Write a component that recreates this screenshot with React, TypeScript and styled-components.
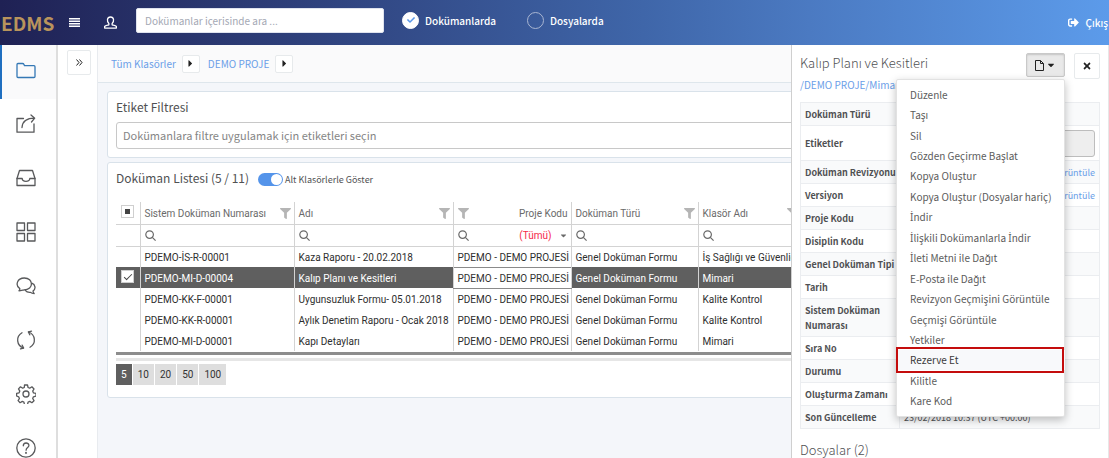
import React, { useState } from "react";
import styled, { createGlobalStyle, css } from "styled-components";
import { FaCaretDown, FaCaretRight, FaCheck, FaFilter, FaSignOutAlt, FaTimes } from "react-icons/fa";

const sans = `"Noto Sans CJK JP", "Noto Sans", sans-serif`;
const plain = `"Noto Sans", "Open Sans", sans-serif`;
const gridFace = `Roboto, "Noto Sans", sans-serif`;

const Global = createGlobalStyle`
  *, *::before, *::after { box-sizing: border-box; }
  body { margin: 0; font-family: ${sans}; font-size: 10px; line-height: 15px; color: #505153; background: #fff; }
  button, input, select { font: inherit; color: inherit; margin: 0; }
  button { cursor: pointer; }
  a { color: #6a9ee8; text-decoration: none; }
  h1, h2, h3, ul { margin: 0; padding: 0; font-weight: 400; }
  ul { list-style: none; }
`;

const Page = styled.div`
  display: flex;
  flex-direction: column;
  height: 100vh;
  overflow: hidden;
`;

const TopBar = styled.header`
  display: flex;
  align-items: center;
  flex: 0 0 45px;
  padding: 0 1px 5px;
  color: #fff;
  background: linear-gradient(90deg, #1f2154 0%, #2e407b 27%, #3f66a9 58%, #4b7ac2 73%, #5c9bea 100%);
`;

const Logo = styled.a`
  flex: 0 0 55px;
  padding-top: 5px;
  color: #b9945c;
  font-size: 19px;
  line-height: 32px;
  font-weight: 700;
`;

const BarButton = styled.button`
  display: grid;
  place-items: center;
  flex: 0 0 36px;
  height: 24px;
  padding: 4px 0 0;
  border: 0;
  background: none;
  color: #fff;
`;

const Search = styled.input`
  flex: 0 0 248px;
  height: 25px;
  margin-left: 8px;
  padding: 0 8px;
  border: 1px solid #dfe3ee;
  border-radius: 2px;
  background: #fff;
  color: #555;
  outline: 0;
  &::placeholder { color: #a4a8b4; opacity: 1; }
`;

const Choice = styled.label`
  display: flex;
  align-items: center;
  gap: 6px;
  margin-left: 18px;
  width: 107px;
  font-weight: 500;
`;

const RadioWrap = styled.span`
  position: relative;
  display: grid;
  place-items: center;
  svg { position: absolute; color: #5a97e8; pointer-events: none; }
`;

const Radio = styled.input`
  appearance: none;
  width: 17px;
  height: 17px;
  border: 1px solid #a9b6d2;
  border-radius: 50%;
  &:checked { background: #fff; border-color: #fff; }
`;

const SignOut = styled.a`
  display: flex;
  align-items: center;
  gap: 7px;
  margin-left: auto;
  padding-top: 5px;
  color: #fff;
  font-weight: 500;
`;

const Body = styled.div`
  display: flex;
  flex: 1;
  min-height: 0;
`;

const Rail = styled.nav`
  flex: 0 0 58px;
  border-right: 2px solid #dedede;
  overflow: hidden;
`;

const RailLink = styled.a<{ $active?: boolean }>`
  display: flex;
  align-items: center;
  height: 54px;
  padding: 0 0 4px 14px;
  border-left: 2px solid ${p => (p.$active ? "#1f6fc0" : "transparent")};
  background: ${p => (p.$active ? "#fafafb" : "none")};
  color: ${p => (p.$active ? "#3478b5" : "#58595b")};
`;

const Gutter = styled.div`
  flex: 0 0 40px;
  padding: 5px 0 0 9px;
  border-right: 1px solid #e8ebef;
`;

const SmallButton = styled.button<{ $w: number; $h: number; $pressed?: boolean }>`
  display: inline-flex;
  align-items: center;
  justify-content: center;
  gap: 1px;
  flex: none;
  width: ${p => p.$w}px;
  height: ${p => p.$h}px;
  padding: 0;
  border: 1px solid ${p => (p.$pressed ? "#c9c9c9" : "#e7eaec")};
  border-radius: 2px;
  background: ${p => (p.$pressed ? "#e9e9e9" : "#fff")};
  box-shadow: ${p => (p.$pressed ? "inset 0 1px 2px #c4c4c4" : "none")};
  color: #222;
`;

const Main = styled.main`
  flex: 1;
  min-width: 0;
  overflow: hidden;
  background: #f4f6fa;
`;

const Crumbs = styled.nav`
  display: flex;
  align-items: center;
  height: 38px;
  padding-left: 13px;
  border-bottom: 1px solid #dee6ec;
  background: #fafafb;
  a { margin-right: 6px; }
  button { margin-right: 8px; }
`;

const Card = styled.section`
  width: calc(100% + 10px);
  margin: 8px 0 0 9px;
  padding: 0 8px;
  border: 1px solid #d9e2ea;
  border-radius: 3px;
  background: #fff;
  & + & { margin-top: 4px; }
`;

const CardTitle = styled.h2`
  font-size: 12px;
  line-height: 30px;
`;

const TagInput = styled.input`
  display: block;
  width: 100%;
  height: 27px;
  margin-bottom: 8px;
  padding: 0 6px 2px;
  border: 1px solid #c8c8c8;
  border-radius: 3px;
  outline: 0;
  font-size: 11px;
  &::placeholder { color: #858585; opacity: 1; }
`;

const ListHead = styled.div`
  display: flex;
  align-items: center;
  gap: 9px;
  height: 30px;
`;

const SwitchLabel = styled.label`
  display: flex;
  align-items: center;
  gap: 2px;
  padding-top: 3px;
  font-size: 9px;
`;

const Switch = styled.input`
  appearance: none;
  width: 25px;
  height: 13px;
  border-radius: 7px;
  background: #c8c8c8;
  &::before {
    content: "";
    display: block;
    width: 11px;
    height: 11px;
    margin: 1px;
    border-radius: 50%;
    background: #fff;
  }
  &:checked { background: #5494ea; }
  &:checked::before { margin-left: 13px; }
`;

const Grid = styled.table`
  width: 100%;
  margin-top: 9px;
  table-layout: fixed;
  border-collapse: collapse;
  color: #2e2e2e;
  font-family: ${gridFace};
  th, td {
    height: 21px;
    padding: 1px 3px 0 4px;
    border-left: 1px solid #d3d3d3;
    text-align: left;
    font-weight: 400;
    white-space: nowrap;
    overflow: hidden;
  }
  th:first-child, td:first-child { border-left: 0; padding: 0; text-align: center; }
  thead th, thead td { height: 22px; border-bottom: 1px solid #d3d3d3; color: #6a6a6a; }
`;

const Row = styled.tr<{ $selected: boolean }>`
  ${p => p.$selected && css`
    color: #fff;
    background: #5f5f5f;
    td:nth-child(4) { background: #fff; color: #333; border-top: 1px solid #8a8a8a; border-bottom: 1px solid #8a8a8a; }
  `}
`;

const HeadCell = styled.div<{ $reverse?: boolean }>`
  display: flex;
  flex-direction: ${p => (p.$reverse ? "row-reverse" : "row")};
  align-items: center;
  justify-content: space-between;
  svg { flex: none; color: #b5b5b5; }
`;

const FilterCell = styled.label`
  display: flex;
  align-items: center;
  svg { flex: none; color: #6a6a6a; }
`;

const FilterInput = styled.input`
  min-width: 0;
  flex: 1;
  height: 18px;
  border: 0;
  outline: 0;
  background: none;
`;

const FilterSelect = styled.select`
  flex: 1;
  appearance: none;
  border: 0;
  padding: 0 7px 0 0;
  outline: 0;
  background: none;
  color: #f5274a;
  text-align-last: right;
`;

const Box = styled.input<{ $mixed?: boolean }>`
  appearance: none;
  display: grid;
  place-items: center;
  width: 13px;
  height: 13px;
  && { margin: 0 auto 2px; }
  border: 1px solid #cfcfcf;
  background: #fff;
  ${p => p.$mixed && css`&::before { content: ""; width: 5px; height: 5px; background: #444; }`}
  &:checked::before {
    content: "";
    width: 8px;
    height: 4px;
    margin-top: -2px;
    border: solid #444;
    border-width: 0 0 1px 1px;
    transform: rotate(-45deg);
  }
`;

const Scroll = styled.div`
  height: 9px;
  margin-top: 1px;
  border-top: 3px solid #8d8d8d;
  border-bottom: 3px solid #e6e6e6;
`;

const Pager = styled.div`
  display: flex;
  gap: 1px;
  padding: 3px 0 12px;
`;

const PageButton = styled.button<{ $on?: boolean }>`
  height: 21px;
  padding: 0 5px;
  border: 0;
  background: ${p => (p.$on ? "#5f5f5f" : "#dedede")};
  color: ${p => (p.$on ? "#fff" : "#333")};
  font-family: ${gridFace};
`;

const Detail = styled.aside`
  flex: 0 0 318px;
  padding: 0 8px;
  border-left: 1px solid #cfcfcf;
  border-right: 1px solid #e7e7e7;
  background: #fff;
  overflow: hidden;
`;

const DetailHead = styled.div`
  display: flex;
  align-items: flex-start;
  gap: 9px;
  padding-top: 8px;
`;

const DetailTitle = styled.h1`
  flex: 1;
  font-size: 13px;
  line-height: 20px;
  font-weight: 300;
`;

const MenuAnchor = styled.div`
  position: relative;
`;

const Menu = styled.ul`
  position: absolute;
  z-index: 2;
  top: 26px;
  right: 0;
  display: grid;
  grid-auto-rows: 1fr;
  width: 169px;
  height: 338px;
  padding: 4px 0 5px;
  border: 1px solid #e2e2e2;
  border-radius: 2px;
  background: #fff;
  box-shadow: 0 3px 8px rgba(0, 0, 0, 0.25);
`;

const MenuItem = styled.button<{ $marked?: boolean }>`
  position: relative;
  display: block;
  width: 100%;
  height: 100%;
  padding: 0 13px;
  border: 0;
  background: ${p => (p.$marked ? "#f8f9fb" : "none")};
  color: ${p => (p.$marked ? "#3a3a3a" : "#5c5c5c")};
  text-align: left;
  white-space: nowrap;
  ${p => p.$marked && css`
    &::after { content: ""; position: absolute; inset: -3px 1px -3px -1px; border: 2px solid #c40d0d; }
  `}
`;

const PathLink = styled.a`
  display: block;
  height: 24px;
  margin-bottom: -1px;
  line-height: 12px;
`;

const Props = styled.table`
  width: 100%;
  border-collapse: collapse;
  table-layout: fixed;
  font-size: 9px;
  th, td { height: 23px; padding: 4px 4px 3px; border: 1px solid #ebedf0; text-align: left; line-height: 15px; }
  th { width: 99px; padding-right: 0; font-weight: 700; }
  td { white-space: nowrap; }
  tr:nth-child(odd) { background: #f9fafb; }
`;

const More = styled.a`
  display: block;
  text-align: right;
`;

const Locked = styled.input`
  display: block;
  width: 100%;
  height: 27px;
  border: 1px solid #bdbdbd;
  border-radius: 3px;
  background: #eee;
`;

const SubTitle = styled.h2`
  margin-top: 10px;
  font-size: 13px;
  line-height: 21px;
  font-weight: 300;
`;

const DottedI = styled.span`
  font-family: ${plain};
  line-height: 1;
`;

/* The main face has no ready-made dotted capital I, so that letter is set in the plain face. */
const Text = ({ children }: { children: string }) => (
  <span>
    {children.split(/(İ)/).map((part, i) => (part === "İ" ? <DottedI key={i}>İ</DottedI> : part))}
  </span>
);

const Stroke = ({ size = 20, children }: { size?: number; children: React.ReactNode }) => (
  <svg width={size} height={size} viewBox="0 0 20 20" fill="none" stroke="currentColor" strokeWidth="1.3" strokeLinejoin="round" strokeLinecap="round" aria-hidden="true">{children}</svg>
);

const SearchIcon = () => (
  <svg width="11" height="11" viewBox="0 0 11 11" fill="none" stroke="currentColor" strokeWidth="1.2" aria-hidden="true">
    <circle cx="4.6" cy="4.6" r="3.8" /><path d="M7.3 7.3 10.6 10.6" />
  </svg>
);

const BarsIcon = () => (
  <svg width="11" height="9" viewBox="0 0 11 9" fill="none" stroke="currentColor" strokeWidth="1.5" aria-hidden="true">
    <path d="M0 .8h11M0 3.300h11M0 5.800h11M0 8.300h11" />
  </svg>
);

const FileIcon = () => (
  <svg width="10" height="11" viewBox="0 0 10 11" fill="none" stroke="currentColor" strokeWidth="1" aria-hidden="true">
    <path d="M.5.5h5l3 3v7h-8ZM5.500.5v3h3" />
  </svg>
);

const railIcons: { label: string; art: React.ReactNode }[] = [
  { label: "Dokümanlar", art: <path d="M1 16.5V4.5q0-1 1-1h4.5q1 0 1.5 1l.5 1.2H18q1 0 1 1v9.8q0 1-1 1H2q-1 0-1-1Z" /> },
  { label: "Paylaşım", art: <><path d="M7.5 4.5H1v13.7h17V10" /><path d="M6 13.5C6.500 7 11 4.200 18.500 4.200M15 1l3.700 3.200L15.500 8" /></> },
  { label: "Gelen Kutusu", art: <><path d="M1 10.500 3.500 2.500h13L19 10.500v7H1Z" /><path d="M1 10.500h5.200c0 3.700 7.600 3.700 7.600 0H19" /></> },
  { label: "Panolar", art: <><rect x="1" y="1" width="7.500" height="7.500" /><rect x="11.500" y="1" width="7.500" height="7.500" /><rect x="1" y="11.500" width="7.500" height="7.500" /><rect x="11.500" y="11.500" width="7.500" height="7.500" /></> },
  { label: "Mesajlar", art: <><path d="M3 14.800c.700-.800.900-1.400.800-2.200C-1 9.500 1 2 8.300 2c9.400 0 9.700 11.800-.3 11.800-2 .500-3.500 1-5 1Z" /><path d="M15.800 7.200c3.700 1.300 4.300 5.700 1.200 7.800 0 1 .300 1.700 1.200 2.600-1.500 0-2.700-.400-3.900-1.300-2.300.200-3.900-.500-5-2" /></> },
  { label: "Akışlar", art: <><path d="M7.500 18C.500 15.500-.500 6.500 6 2.800M12.500 2c7 2.500 8 11.500 1.500 15.200" /><path d="M4.500 18.800 7.600 18 6.200 15.200M15.500 1.200 12.400 2l1.400 2.800" /></> },
  { label: "Ayarlar", art: <><circle cx="10" cy="10" r="3" /><path d="m8.500 1h3l.600 2.500 1.600.700 2.200-1.400 2.100 2.200-1.300 2.100.7 1.700 2.600.600v2.700l-2.600.700-.7 1.700 1.300 2.200-2.100 2-2.100-1.300-1.700.700-.600 2.600h-3l-.600-2.600-1.600-.700-2.200 1.300-2-2.100 1.300-2.100-.7-1.700L.600 12V9.400l2.500-.600.7-1.700-1.300-2.200 2-2.100 2.200 1.400 1.600-.700Z" /></> },
  { label: "Yardım", art: <><circle cx="10" cy="10" r="9.200" /><path d="M7.300 7.800c0-3.800 5.600-3.600 5.600-.3 0 2-2.800 2.200-2.800 4.700" /><path d="M10 14.700v.4" strokeWidth="1.800" /></> },
];

const rows = [
  ["PDEMO-İS-R-00001", "Kaza Raporu - 20.02.2018", "İş Sağlığı ve Güvenliği"],
  ["PDEMO-MI-D-00004", "Kalıp Planı ve Kesitleri", "Mimari"],
  ["PDEMO-KK-F-00001", "Uygunsuzluk Formu- 05.01.2018", "Kalite Kontrol"],
  ["PDEMO-KK-R-00001", "Aylık Denetim Raporu - Ocak 2018", "Kalite Kontrol"],
  ["PDEMO-MI-D-00001", "Kapı Detayları", "Mimari"],
];

const menu = [
  "Düzenle", "Taşı", "Sil", "Gözden Geçirme Başlat", "Kopya Oluştur", "Kopya Oluştur (Dosyalar hariç)", "İndir",
  "İlişkili Dokümanlarla İndir", "İleti Metni ile Dağıt", "E-Posta ile Dağıt", "Revizyon Geçmişini Görüntüle",
  "Geçmişi Görüntüle", "Yetkiler", "Rezerve Et", "Kilitle", "Kare Kod",
];

const details: [string, React.ReactNode][] = [
  ["Doküman Türü", null],
  ["Etiketler", <Locked disabled aria-label="Etiketler" />],
  ["Doküman Revizyonu", <More href="#">Görüntüle</More>],
  ["Versiyon", <More href="#">Görüntüle</More>],
  ["Proje Kodu", null],
  ["Disiplin Kodu", null],
  ["Genel Doküman Tipi", null],
  ["Tarih", null],
  ["Sistem Doküman Numarası", null],
  ["Sıra No", null],
  ["Durumu", null],
  ["Oluşturma Zamanı", null],
  ["Son Güncelleme", "23/02/2018 10:37 (UTC +00:00)"],
];

export default function App() {
  const [scope, setScope] = useState("doc");
  const [selected, setSelected] = useState(1);
  const scopes = [["doc", "Dokümanlarda"], ["file", "Dosyalarda"]];
  return (
    <Page lang="tr">
      <Global />
      <TopBar>
        <Logo href="#">EDMS</Logo>
        <BarButton aria-label="Menü"><BarsIcon /></BarButton>
        <BarButton aria-label="Profil">
          <Stroke size={13}><path strokeWidth="2" d="M1 18.500v-2.500c1-1.500 4-1.800 6.500-2.500v-2C4 8 4.500 1.500 10 1.500s6 6.500 2.500 10v2c2.500.700 5.500 1 6.500 2.500v2.500Z" /></Stroke>
        </BarButton>
        <Search type="search" aria-label="Ara" placeholder="Dokümanlar içerisinde ara ..." />
        {scopes.map(([key, label]) => (
          <Choice key={key}>
            <RadioWrap>
              <Radio type="radio" name="scope" checked={scope === key} onChange={() => setScope(key)} />
              {scope === key && <FaCheck size={8} />}
            </RadioWrap>
            {label}
          </Choice>
        ))}
        <SignOut href="#"><FaSignOutAlt size={11} />Çıkış</SignOut>
      </TopBar>
      <Body>
        <Rail>
          {railIcons.map((icon, i) => (
            <RailLink key={icon.label} href="#" aria-label={icon.label} $active={i === 0}><Stroke>{icon.art}</Stroke></RailLink>
          ))}
        </Rail>
        <Gutter>
          <SmallButton $w={24} $h={25} aria-label="Klasörleri aç">
            <svg width="7" height="7" viewBox="0 0 7 7" fill="none" stroke="currentColor" aria-hidden="true"><path d="m.5.5 2.500 3-2.500 3M3.500.5 6 3.500l-2.500 3" /></svg>
          </SmallButton>
        </Gutter>
        <Main>
          <Crumbs>
            <a href="#">Tüm Klasörler</a><SmallButton $w={18} $h={18} aria-label="Aç"><FaCaretRight size={11} /></SmallButton>
            <a href="#">DEMO PROJE</a><SmallButton $w={18} $h={18} aria-label="Aç"><FaCaretRight size={11} /></SmallButton>
          </Crumbs>
          <Card>
            <CardTitle>Etiket Filtresi</CardTitle>
            <TagInput aria-label="Etiket Filtresi" placeholder="Dokümanlara filtre uygulamak için etiketleri seçin" />
          </Card>
          <Card>
            <ListHead>
              <CardTitle>Doküman Listesi (5 / 11)</CardTitle>
              <SwitchLabel><Switch type="checkbox" defaultChecked />Alt Klasörlerle Göster</SwitchLabel>
            </ListHead>
            <Grid>
              <colgroup>
                <col style={{ width: 24 }} /><col style={{ width: 154 }} /><col style={{ width: 159 }} />
                <col style={{ width: 118 }} /><col style={{ width: 127 }} /><col />
              </colgroup>
              <thead>
                <tr>
                  <th><Box type="checkbox" $mixed aria-label="Tümünü seç" /></th>
                  <th><HeadCell>Sistem Doküman Numarası<FaFilter size={11} /></HeadCell></th>
                  <th><HeadCell>Adı<FaFilter size={11} /></HeadCell></th>
                  <th><HeadCell $reverse>Proje Kodu<FaFilter size={11} /></HeadCell></th>
                  <th><HeadCell>Doküman Türü<FaFilter size={11} /></HeadCell></th>
                  <th><HeadCell>Klasör Adı<FaFilter size={11} /></HeadCell></th>
                </tr>
                <tr>
                  <td />
                  <td><FilterCell><SearchIcon /><FilterInput aria-label="Sistem Doküman Numarası" /></FilterCell></td>
                  <td><FilterCell><SearchIcon /><FilterInput aria-label="Adı" /></FilterCell></td>
                  <td><FilterCell><SearchIcon /><FilterSelect aria-label="Proje Kodu"><option>(Tümü)</option></FilterSelect><FaCaretDown size={9} /></FilterCell></td>
                  <td><FilterCell><SearchIcon /><FilterInput aria-label="Doküman Türü" /></FilterCell></td>
                  <td><FilterCell><SearchIcon /><FilterInput aria-label="Klasör Adı" /></FilterCell></td>
                </tr>
              </thead>
              <tbody>
                {rows.map(([code, name, folder], i) => (
                  <Row key={code} $selected={i === selected} onClick={() => setSelected(i)}>
                    <td>{i === selected && <Box type="checkbox" checked readOnly aria-label={code} />}</td>
                    <td>{code}</td>
                    <td>{name}</td>
                    <td>PDEMO - DEMO PROJESİ</td>
                    <td>Genel Doküman Formu</td>
                    <td>{folder}</td>
                  </Row>
                ))}
              </tbody>
            </Grid>
            <Scroll />
            <Pager>{[5, 10, 20, 50, 100].map(n => <PageButton key={n} $on={n === 5}>{n}</PageButton>)}</Pager>
          </Card>
        </Main>
        <Detail>
          <DetailHead>
            <DetailTitle>Kalıp Planı ve Kesitleri</DetailTitle>
            <MenuAnchor>
              <SmallButton $w={39} $h={24} $pressed aria-label="Doküman işlemleri"><FileIcon /><FaCaretDown size={10} /></SmallButton>
              <Menu>
                {menu.map(m => <li key={m}><MenuItem $marked={m === "Rezerve Et"}><Text>{m}</Text></MenuItem></li>)}
              </Menu>
            </MenuAnchor>
            <SmallButton $w={26} $h={26} aria-label="Kapat"><FaTimes size={10} /></SmallButton>
          </DetailHead>
          <PathLink href="#">/DEMO PROJE/Mimari</PathLink>
          <Props>
            <tbody>
              {details.map(([k, v]) => <tr key={k}><th scope="row">{k}</th><td>{v}</td></tr>)}
            </tbody>
          </Props>
          <SubTitle>Dosyalar (2)</SubTitle>
        </Detail>
      </Body>
    </Page>
  );
}
